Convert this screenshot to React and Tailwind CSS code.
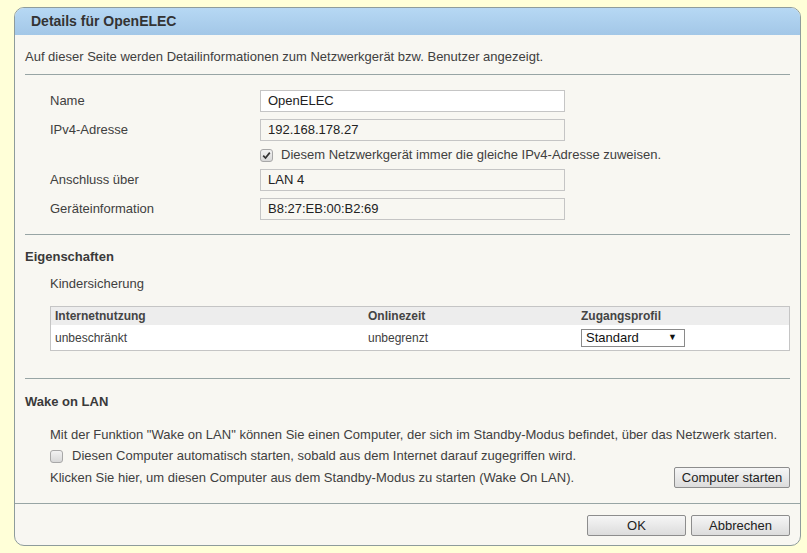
import React from 'react';

const font = { fontFamily: '"Liberation Sans", Arial, sans-serif' };

function Field({ label, value, white }) {
  return (
    <div className="flex items-center h-[22px]">
      <div className="w-[235px] pl-[25px] text-[13px] text-[#404040]">{label}</div>
      <div
        className={`w-[305px] h-[22px] border border-[#c5c5c5] pl-[7px] flex items-center text-[13px] text-[#222] ${white ? 'bg-white' : 'bg-[#f8f7f2]'}`}
      >
        {value}
      </div>
    </div>
  );
}

function CheckBox({ checked }) {
  return (
    <span className="inline-flex items-center justify-center w-[13px] h-[13px] rounded-[3px] border border-[#a8a8a8] bg-gradient-to-b from-[#f2f2f2] to-[#d8d8d8]">
      {checked && (
        <svg width="9" height="9" viewBox="0 0 9 9">
          <path d="M1.2 4.6 L3.5 7 L7.8 1.6" fill="none" stroke="#333" strokeWidth="1.7" />
        </svg>
      )}
    </span>
  );
}

function Btn({ children, className = '' }) {
  return (
    <button className={`h-[21px] border border-[#8d8d8d] rounded-[2px] bg-gradient-to-b from-[#f6f6f6] to-[#dcdcdc] text-[13px] text-[#222] leading-none ${className}`}>
      {children}
    </button>
  );
}

export default function App() {
  return (
    <div className="min-h-[553px] bg-[#ffffd8] pt-[7px] pl-[14px]" style={font}>
      <div className="w-[787px] h-[539px] border border-[#8e9c9c] rounded-[10px] bg-[#f8f7f2] flex flex-col overflow-hidden">
        {/* Kopf */}
        <div className="h-[27px] shrink-0 bg-gradient-to-b from-[#b6d8f4] to-[#a3c7e7] flex items-center pl-[16px]">
          <h1 className="text-[14px] font-bold text-[#333]">Details für OpenELEC</h1>
        </div>

        {/* Inhalt */}
        <div className="px-[10px] text-[#404040]">
          <p className="mt-[14px] text-[13px] leading-[16px]">
            Auf dieser Seite werden Detailinformationen zum Netzwerkgerät bzw. Benutzer angezeigt.
          </p>
          <div className="mt-[9px] border-t border-[#98a5a5]" />

          <div className="mt-[15px] flex flex-col gap-[7px]">
            <Field label="Name" value="OpenELEC" white />
            <Field label="IPv4-Adresse" value="192.168.178.27" />
            <div className="flex items-center h-[14px] pl-[235px] gap-[8px]">
              <CheckBox checked />
              <span className="text-[13px]">Diesem Netzwerkgerät immer die gleiche IPv4-Adresse zuweisen.</span>
            </div>
            <Field label="Anschluss über" value="LAN 4" />
            <Field label="Geräteinformation" value="B8:27:EB:00:B2:69" />
          </div>
          <div className="mt-[14px] border-t border-[#98a5a5]" />

          <h2 className="mt-[14px] text-[13px] leading-[16px] font-bold text-[#3a3a3a]">Eigenschaften</h2>
          <p className="mt-[11px] pl-[25px] text-[13px] leading-[16px]">Kindersicherung</p>

          <div className="mt-[14px] ml-[25px] border border-[#c5c5c5] text-[12px]">
            <div className="flex h-[18px] items-center bg-[#ededed] font-bold text-[#444]">
              <div className="w-[313px] pl-[4px]">Internetnutzung</div>
              <div className="w-[213px] pl-[4px]">Onlinezeit</div>
              <div className="pl-[4px]">Zugangsprofil</div>
            </div>
            <div className="flex h-[25px] items-center bg-white">
              <div className="w-[313px] pl-[4px]">unbeschränkt</div>
              <div className="w-[213px] pl-[4px]">unbegrenzt</div>
              <div className="pl-[4px]">
                <div className="w-[104px] h-[18px] border border-[#8a8a8a] bg-white flex items-center justify-between pl-[4px] pr-[7px] text-[13px] text-[#111]">
                  <span>Standard</span>
                  <span className="text-[9px]">▼</span>
                </div>
              </div>
            </div>
          </div>
          <div className="mt-[27px] border-t border-[#98a5a5]" />

          <h2 className="mt-[15px] text-[13px] leading-[16px] font-bold text-[#3a3a3a]">Wake on LAN</h2>
          <p className="mt-[17px] pl-[25px] text-[13px] leading-[16px]">
            Mit der Funktion "Wake on LAN" können Sie einen Computer, der sich im Standby-Modus befindet, über das Netzwerk starten.
          </p>
          <div className="mt-[5px] pl-[25px] flex items-center gap-[9px] h-[16px]">
            <CheckBox />
            <span className="text-[13px]">Diesen Computer automatisch starten, sobald aus dem Internet darauf zugegriffen wird.</span>
          </div>
          <div className="mt-[3px] pl-[25px] flex items-center justify-between">
            <span className="text-[13px]">Klicken Sie hier, um diesen Computer aus dem Standby-Modus zu starten (Wake On LAN).</span>
            <Btn className="w-[116px]">Computer starten</Btn>
          </div>
        </div>

        {/* Fuß */}
        <div className="mt-[15px] border-t border-[#98a5a5] flex justify-end gap-[5px] pt-[11px] pr-[10px]">
          <Btn className="w-[99px]">OK</Btn>
          <Btn className="w-[99px]">Abbrechen</Btn>
        </div>
      </div>
    </div>
  );
}
